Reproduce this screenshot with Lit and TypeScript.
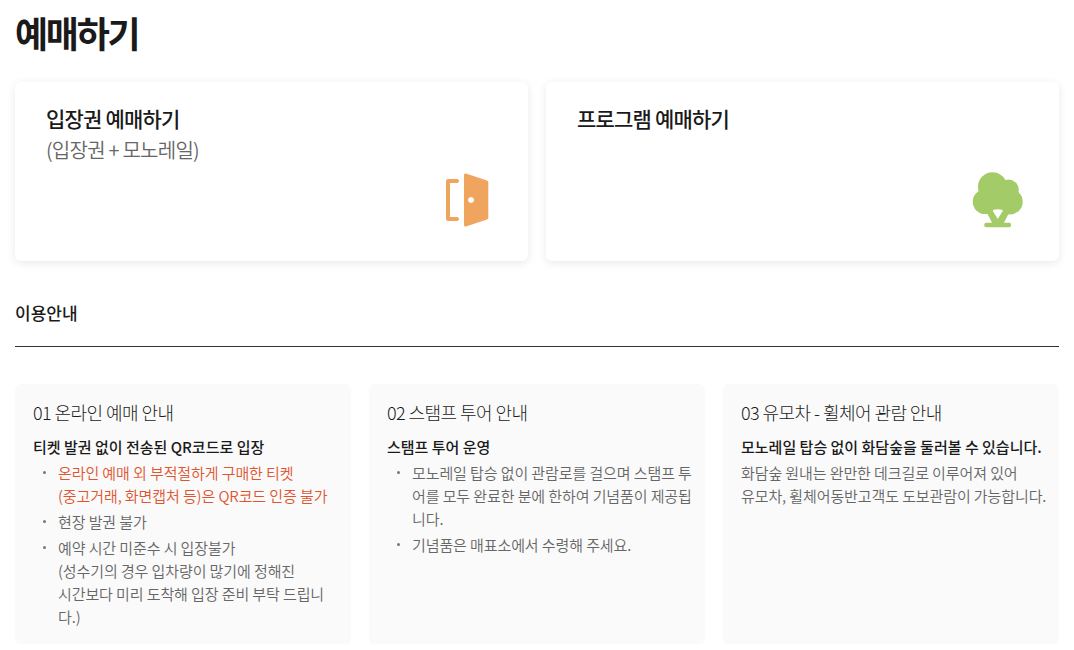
import { LitElement, html, css } from "lit";
import { customElement } from "lit/decorators.js";

@customElement("app-root")
export class AppRoot extends LitElement {
  static styles = css`
    :host { display: block; height: 650px; overflow: hidden; background: #fff; font-family: "Noto Sans CJK KR", "Noto Sans", sans-serif; color: #1a1a1a; }
    .page { padding: 0 15px; box-sizing: border-box; width: 1074px; }
    h1 { margin: 0; padding-top: 7px; height: 82px; box-sizing: border-box; font-size: 36px; line-height: 50px; font-weight: 700; letter-spacing: -2.3px; color: #1a1a1a; }
    .cards { display: grid; grid-template-columns: 513px 513px; gap: 18px; }
    .card { position: relative; height: 179px; box-sizing: border-box; padding: 21px 31px; background: #fff; border-radius: 6px; box-shadow: 0 2px 10px rgba(0,0,0,.09); }
    .card h2 { margin: 0; font-size: 21px; line-height: 30px; font-weight: 500; letter-spacing: -.8px; color: #1a1a1a; }
    .card p { margin: 2px 0 0; font-size: 20px; line-height: 30px; font-weight: 350; letter-spacing: -.75px; color: #666; }
    .icon { position: absolute; }
    .card .door { left: 429px; top: 90px; }
    .card .tree { left: 425px; top: 89px; }
    h3 { margin: 0; height: 86px; box-sizing: border-box; padding-top: 39px; border-bottom: 1px solid #333; font-size: 17px; line-height: 26px; font-weight: 500; letter-spacing: 0; color: #1a1a1a; }
    .notes { margin-top: 37px; display: grid; grid-template-columns: repeat(3, 336px); gap: 18px; }
    .note { height: 260px; box-sizing: border-box; padding: 14px 18px; background: #fafafa; border-radius: 6px; }
    .note h4 { margin: 0 0 9px; font-size: 18px; line-height: 28px; font-weight: 300; letter-spacing: -.55px; color: #1a1a1a; }
    .note strong { display: block; font-size: 15px; line-height: 24px; font-weight: 500; letter-spacing: 0; color: #1a1a1a; white-space: nowrap; }
    ul { margin: 0; padding: 2px 0 0 25px; list-style: none; }
    li { position: relative; font-size: 15px; line-height: 23px; font-weight: 350; letter-spacing: -.1px; color: #666; margin-bottom: 3px; white-space: nowrap; }
    li::before { content: ""; position: absolute; left: -15px; top: 10px; width: 3px; height: 3px; border-radius: 50%; background: #777; }
    li.red { color: #e0552f; }
    .plain { font-size: 15px; line-height: 23px; font-weight: 350; letter-spacing: -.1px; color: #666; padding-top: 2px; white-space: nowrap; }
  `;

  render() {
    return html`<div class="page">
      <h1>예매하기</h1>
      <div class="cards">
        <div class="card">
          <h2>입장권 예매하기</h2>
          <p>(입장권 + 모노레일)</p>
          <svg class="icon door" width="46" height="56" viewBox="0 0 46 56">
            <path d="M13 9H4V47H13" fill="none" stroke="#f0a55f" stroke-width="4" stroke-linecap="round" stroke-linejoin="round"/>
            <path fill-rule="evenodd" fill="#f0a55f" d="M20 3Q20 1 22 1.500L43 8.500Q44.300 9 44.300 10.500V45.500Q44.300 47 43 47.500L22 54.500Q20 55 20 53ZM27 25a3 3 0 1 0 0.01 0Z"/>
          </svg>
        </div>
        <div class="card">
          <h2>프로그램 예매하기</h2>
          <svg class="icon tree" width="54" height="58" viewBox="0 0 54 58">
            <g fill="#a3cb68">
              <circle cx="21.500" cy="15.700" r="14.500"/>
              <circle cx="37.300" cy="19" r="10.500"/>
              <circle cx="14" cy="30.700" r="12.300"/>
              <circle cx="39" cy="30.700" r="12.700"/>
              <rect x="14" y="14" width="26" height="26"/>
              <path d="M14 38L21.700 53H32.300L40 38Z"/>
              <rect x="13.300" y="51.700" width="26.700" height="4.600" rx="1.800"/>
            </g>
            <path fill="#fff" d="M22.500 38.800Q26.500 37.500 31 38.800Q32 39.300 31.500 40.300L26.800 48L22 40.300Q21.500 39.300 22.500 38.800Z"/>
          </svg>
        </div>
      </div>
      <h3>이용안내</h3>
      <div class="notes">
        <div class="note">
          <h4>01 온라인 예매 안내</h4>
          <strong>티켓 발권 없이 전송된 QR코드로 입장</strong>
          <ul>
            <li class="red">온라인 예매 외 부적절하게 구매한 티켓<br>(중고거래, 화면캡처 등)은 QR코드 인증 불가</li>
            <li>현장 발권 불가</li>
            <li>예약 시간 미준수 시 입장불가<br>(성수기의 경우 입차량이 많기에 정해진<br>시간보다 미리 도착해 입장 준비 부탁 드립니<br>다.)</li>
          </ul>
        </div>
        <div class="note">
          <h4>02 스탬프 투어 안내</h4>
          <strong>스탬프 투어 운영</strong>
          <ul>
            <li>모노레일 탑승 없이 관람로를 걸으며 스탬프 투<br>어를 모두 완료한 분에 한하여 기념품이 제공됩<br>니다.</li>
            <li>기념품은 매표소에서 수령해 주세요.</li>
          </ul>
        </div>
        <div class="note">
          <h4>03 유모차 - 휠체어 관람 안내</h4>
          <strong>모노레일 탑승 없이 화담숲을 둘러볼 수 있습니다.</strong>
          <div class="plain">화담숲 원내는 완만한 데크길로 이루어져 있어<br>유모차, 휠체어동반고객도 도보관람이 가능합니다.</div>
        </div>
      </div>
    </div>`;
  }
}
